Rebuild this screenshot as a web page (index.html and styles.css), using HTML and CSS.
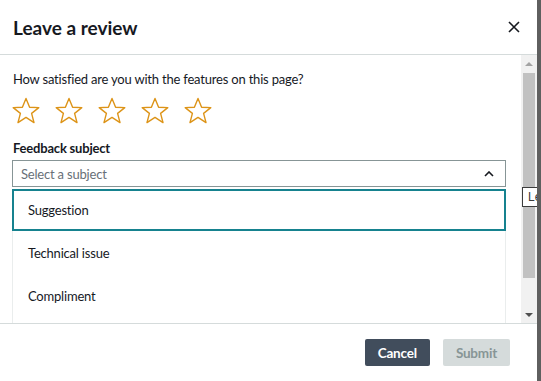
FILE: index.html
```html
<!DOCTYPE html>
<html lang="en">
  <head>
    <meta charset="UTF-8" />
    <title>Leave a review</title>
    <link rel="stylesheet" href="styles.css">
  </head>
  <body>
    <div class="modal">
      <!-- Header -->
      <div class="modal-header">
        <h2 class="modal-title">Leave a review</h2>
        <svg class="close-icon" width="12" height="12" viewBox="0 0 12 12">
          <path d="M1 1 L11 11 M11 1 L1 11" stroke="#16191f" stroke-width="1.6" fill="none" />
        </svg>
      </div>

      <!-- Scrollable body -->
      <div class="modal-body">
        <div class="body-content">
          <p class="question">How satisfied are you with the features on this page?</p>
          <div class="stars">
            <svg class="star" viewBox="0 0 28 28"><path d="M14 1.5 L17.6 10.2 L26.8 10.6 L19.6 16.4 L22 25.6 L14 20.4 L6 25.6 L8.4 16.4 L1.2 10.6 L10.4 10.2 Z" /></svg>
            <svg class="star" viewBox="0 0 28 28"><path d="M14 1.5 L17.6 10.2 L26.8 10.6 L19.6 16.4 L22 25.6 L14 20.4 L6 25.6 L8.4 16.4 L1.2 10.6 L10.4 10.2 Z" /></svg>
            <svg class="star" viewBox="0 0 28 28"><path d="M14 1.5 L17.6 10.2 L26.8 10.6 L19.6 16.4 L22 25.6 L14 20.4 L6 25.6 L8.4 16.4 L1.2 10.6 L10.4 10.2 Z" /></svg>
            <svg class="star" viewBox="0 0 28 28"><path d="M14 1.5 L17.6 10.2 L26.8 10.6 L19.6 16.4 L22 25.6 L14 20.4 L6 25.6 L8.4 16.4 L1.2 10.6 L10.4 10.2 Z" /></svg>
            <svg class="star" viewBox="0 0 28 28"><path d="M14 1.5 L17.6 10.2 L26.8 10.6 L19.6 16.4 L22 25.6 L14 20.4 L6 25.6 L8.4 16.4 L1.2 10.6 L10.4 10.2 Z" /></svg>
          </div>

          <label class="field-label">Feedback subject</label>
          <div class="select">
            <span>Select a subject</span>
            <svg width="10" height="6" viewBox="0 0 10 6">
              <path d="M1 5 L5 1 L9 5" stroke="#16191f" stroke-width="1.6" fill="none" />
            </svg>
          </div>
          <div class="options">
            <div class="option focused">Suggestion</div>
            <div class="option">Technical issue</div>
            <div class="option">Compliment</div>
          </div>
        </div>

        <!-- Scrollbar -->
        <div class="scrollbar">
          <div class="arrow up"></div>
          <div class="thumb"></div>
          <div class="arrow down"></div>
        </div>

        <div class="tooltip">Le</div>
      </div>

      <!-- Footer -->
      <div class="modal-footer">
        <button class="btn btn-cancel">Cancel</button>
        <button class="btn btn-submit">Submit</button>
      </div>
    </div>
  </body>
</html>
```

FILE: styles.css
```css
/* Review modal */
body {
  margin: 0;
  font-family: Lato, Arial, sans-serif;
  letter-spacing: -0.2px;
  background-color: #fff;
  color: #16191f;
}

.modal {
  width: 537px;
  height: 381px;
  display: flex;
  flex-direction: column;
  border-right: 4px solid #5f5f5f;
  background-color: #fff;
}

/* Header */
.modal-header {
  height: 54px;
  flex-shrink: 0;
  display: flex;
  align-items: center;
  justify-content: space-between;
  padding: 0 17px 0 13px;
  border-bottom: 1px solid #d5dbdb;
}

.modal-title {
  margin: 0;
  font-size: 19px;
  font-weight: 700;
  letter-spacing: 0;
}

/* Body */
.modal-body {
  position: relative;
  height: 268px;
  display: flex;
  overflow: hidden;
  border-bottom: 1px solid #d5dbdb;
}

.body-content {
  flex: 1;
  padding: 14px 15px 0 12px;
}

.question {
  margin: 0 0 0 1px;
  font-size: 13px;
  line-height: 20px;
  color: #16191f;
}

.stars {
  display: flex;
  gap: 15px;
  margin-top: 8px;
}

.star {
  width: 28px;
  height: 28px;
}

.star path {
  fill: none;
  stroke: #dd9418;
  stroke-width: 1.4;
  stroke-linejoin: round;
}

.field-label {
  display: block;
  margin: 13px 0 2px 1px;
  font-size: 13px;
  font-weight: 700;
  line-height: 20px;
}

.select {
  height: 25px;
  display: flex;
  align-items: center;
  justify-content: space-between;
  padding: 0 11px 0 8px;
  border: 1px solid #879596;
  font-size: 13px;
  color: #687078;
}

/* Dropdown list */
.options {
  height: 200px;
  border-left: 1px solid #eaeded;
  border-right: 1px solid #eaeded;
}

.option {
  height: 43px;
  display: flex;
  align-items: center;
  padding-left: 15px;
  font-size: 13px;
  color: #16191f;
}

.option.focused {
  height: 38px;
  margin: 2px -1px 0;
  border: 2px solid #16828f;
  padding-left: 14px;
}

/* Fake scrollbar */
.scrollbar {
  width: 16px;
  flex-shrink: 0;
  display: flex;
  flex-direction: column;
  background-color: #f1f1f1;
}

.arrow {
  height: 17px;
  flex-shrink: 0;
  display: flex;
  align-items: center;
  justify-content: center;
}

.arrow::after {
  content: "";
  border-left: 4px solid transparent;
  border-right: 4px solid transparent;
}

.arrow.up::after {
  border-bottom: 4px solid #a3a3a3;
}

.arrow.down::after {
  border-top: 4px solid #505050;
}

.thumb {
  flex: 1;
  margin: 1px 2px 28px;
  background-color: #c1c1c1;
}

/* Browser tooltip peeking from the edge */
.tooltip {
  position: absolute;
  left: 522px;
  top: 132px;
  height: 18px;
  padding: 0 4px 0 5px;
  border: 1px solid #3c3c3c;
  background-color: #fff;
  font-family: "Liberation Sans", Arial, sans-serif;
  font-size: 12px;
  line-height: 18px;
  letter-spacing: 0;
  color: #3a3a3a;
  white-space: nowrap;
}

/* Footer */
.modal-footer {
  flex: 1;
  display: flex;
  justify-content: flex-end;
  align-items: center;
  gap: 13px;
  padding: 0 27px 0 0;
}

.btn {
  height: 27px;
  padding: 0 13px;
  border: none;
  border-radius: 2px;
  font-family: Lato, Arial, sans-serif;
  font-size: 13.5px;
  font-weight: 700;
  letter-spacing: -0.2px;
}

.btn-cancel {
  background-color: #414d5c;
  color: #fff;
}

.btn-submit {
  background-color: #d5dbdb;
  color: #879596;
}
```
